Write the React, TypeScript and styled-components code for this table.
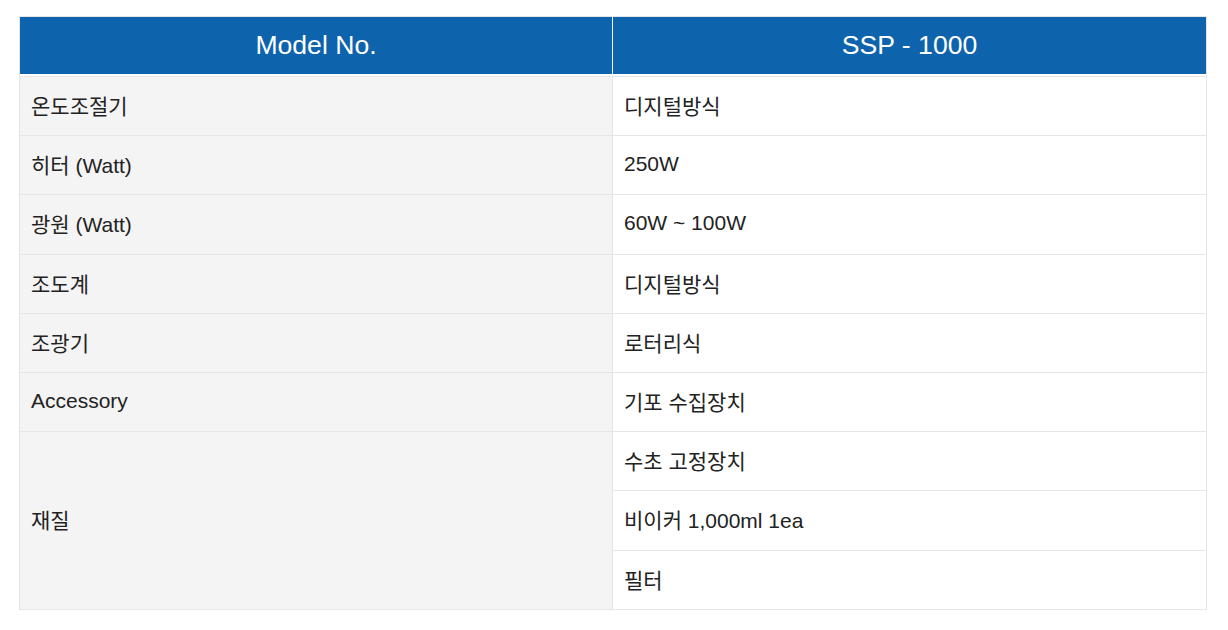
import React from 'react';
import styled, { createGlobalStyle } from 'styled-components';

const GlobalStyle = createGlobalStyle`
  html, body {
    margin: 0;
    padding: 0;
    background: #ffffff;
  }
  body {
    font-family: 'Liberation Sans', Arial, 'Noto Sans CJK KR', sans-serif;
    color: #222222;
  }
  * {
    box-sizing: border-box;
  }
`;

const Page = styled.div`
  padding: 16px 21px 20px 19px;
`;

const SpecTable = styled.div`
  display: flex;
  flex-direction: column;
  width: 1188px;
  border: 1px solid #e6e6e6;
  border-bottom: 0;
`;

const HeaderRow = styled.div`
  display: grid;
  grid-template-columns: 592px 1fr;
  border-bottom: 2px solid #ffffff;
`;

const HeaderCell = styled.div`
  height: 57px;
  display: flex;
  align-items: center;
  justify-content: center;
  background: #0e63ad;
  color: #ffffff;
  font-size: 26.6px;
  & + & {
    border-left: 1px solid #ffffff;
  }
`;

const Body = styled.div`
  display: grid;
  grid-template-columns: 592px 1fr;
  grid-auto-rows: 59.2px;
  border-top: 1px solid #e6e6e6;
`;

const Cell = styled.div<{ $label?: boolean; $span?: number }>`
  display: flex;
  align-items: center;
  padding: 0 11px 2px;
  font-size: 21px;
  color: #222222;
  background: ${(p) => (p.$label ? '#f4f4f4' : '#ffffff')};
  border-bottom: 1px solid #e6e6e6;
  border-left: ${(p) => (p.$label ? '0' : '1px solid #e6e6e6')};
  grid-column: ${(p) => (p.$label ? 1 : 2)};
  grid-row: ${(p) => (p.$span ? `span ${p.$span}` : 'auto')};
  white-space: nowrap;
`;

const specs: { label: string; values: string[] }[] = [
  { label: '온도조절기', values: ['디지털방식'] },
  { label: '히터 (Watt)', values: ['250W'] },
  { label: '광원 (Watt)', values: ['60W ~ 100W'] },
  { label: '조도계', values: ['디지털방식'] },
  { label: '조광기', values: ['로터리식'] },
  { label: 'Accessory', values: ['기포 수집장치'] },
  { label: '재질', values: ['수초 고정장치', '비이커 1,000ml 1ea', '필터'] },
];

export default function App() {
  return (
    <>
      <GlobalStyle />
      <Page>
        <SpecTable>
          <HeaderRow>
            <HeaderCell>Model No.</HeaderCell>
            <HeaderCell>SSP - 1000</HeaderCell>
          </HeaderRow>
          <Body>
            {specs.map((row) => (
              <React.Fragment key={row.label}>
                <Cell $label $span={row.values.length > 1 ? row.values.length : undefined}>
                  {row.label}
                </Cell>
                {row.values.map((v) => (
                  <Cell key={v}>{v}</Cell>
                ))}
              </React.Fragment>
            ))}
          </Body>
        </SpecTable>
      </Page>
    </>
  );
}
